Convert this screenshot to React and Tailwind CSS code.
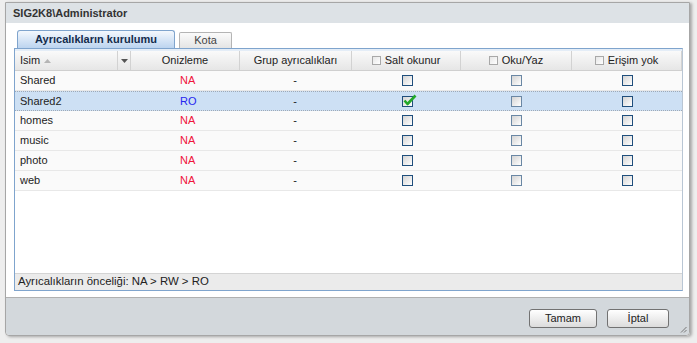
import React from "react";

const COLS = "grid grid-cols-[116px_109px_112px_109px_111px_110px]";

const rows = [
  { name: "Shared", prev: "NA" },
  { name: "Shared2", prev: "RO", selected: true, ro: true },
  { name: "homes", prev: "NA" },
  { name: "music", prev: "NA" },
  { name: "photo", prev: "NA" },
  { name: "web", prev: "NA" },
];

const Box = ({ checked, gray }) => (
  <span
    className={`relative inline-block h-[11px] w-[11px] border bg-gradient-to-br from-[#d4d4d4] to-[#ffffff] ${
      gray ? "border-[#6a87a4]" : "border-[#1f4e7c]"
    }`}
  >
    {checked && (
      <svg className="absolute -top-[3px] left-[0px]" width="14" height="12" viewBox="0 0 14 12">
        <path d="M1.5 6.5 L4.5 10 L12.5 1.5" fill="none" stroke="#22a82a" strokeWidth="2.6" strokeLinejoin="round" />
      </svg>
    )}
  </span>
);

const HeadBox = () => (
  <span className="inline-block h-[9px] w-[9px] border border-[#a8a8a8] bg-gradient-to-br from-[#e6e6e6] to-white" />
);

export default function App() {
  return (
    <div className="h-[343px] w-[697px] bg-[#eeeeee] pl-[5px] pt-[2px] font-['Liberation_Sans',Arial,sans-serif] text-[11px] text-[#222]">
      <div className="flex h-[334px] w-[685px] flex-col rounded-b-[4px] border border-[#a6a6a6] shadow-[2px_1px_3px_rgba(0,0,0,0.3)]">
        {/* title */}
        <div className="flex h-[20px] items-center bg-[#dde2e6] px-[7px] text-[11px] font-bold text-[#333]">
          SIG2K8\Administrator
        </div>

        {/* content */}
        <div className="flex flex-1 flex-col bg-white pl-[8px] pr-[6px] pt-[7px] pb-[6px]">
          {/* tabs */}
          <div className="flex items-end gap-[4px] pl-[3px]">
            <div className="flex h-[18px] w-[158px] items-center justify-center rounded-t-[3px] border border-b-0 border-[#7fa4cd] bg-gradient-to-b from-[#f4f8fd] to-[#bcd4ef] font-bold text-[#142c4c]">
              Ayrıcalıkların kurulumu
            </div>
            <div className="flex h-[16px] w-[53px] items-center justify-center rounded-t-[2px] border border-b-0 border-[#b4b4b4] bg-gradient-to-b from-[#fbfbfb] to-[#e4e4e4] text-[#444]">
              Kota
            </div>
          </div>

          {/* panel */}
          <div className="flex flex-1 flex-col border border-[#7fa4cd] border-r-[#b9c6d4]">
            <div className="h-[2px] bg-[#e4edf7]" />
            <div className={`${COLS} h-[20px] border-b border-[#cfcfcf] bg-gradient-to-b from-[#fafafa] to-[#e6e6e6] text-[#222]`}>
              <div className="flex items-center border-r border-[#d2d2d2]">
                <span className="flex flex-1 items-center gap-[4px] pl-[5px]">
                  Isim
                  <svg width="7" height="4" viewBox="0 0 7 4">
                    <path d="M0 4 L3.5 0 L7 4 Z" fill="#b5b5b5" />
                  </svg>
                </span>
                <span className="flex h-full w-[13px] items-center justify-center border-l border-[#d2d2d2]">
                  <svg width="7" height="4" viewBox="0 0 7 4">
                    <path d="M0 0 L7 0 L3.5 4 Z" fill="#555" />
                  </svg>
                </span>
              </div>
              <div className="flex items-center justify-center border-r border-[#d2d2d2]">Onizleme</div>
              <div className="flex items-center justify-center border-r border-[#d2d2d2]">Grup ayrıcalıkları</div>
              <div className="flex items-center justify-center gap-[4px] border-r border-[#d2d2d2]">
                <HeadBox />
                Salt okunur
              </div>
              <div className="flex items-center justify-center gap-[4px] border-r border-[#d2d2d2]">
                <HeadBox />
                Oku/Yaz
              </div>
              <div className="flex items-center justify-center gap-[4px] border-r border-[#d2d2d2]">
                <HeadBox />
                Erişim yok
              </div>
            </div>

            {rows.map((r) => (
              <div
                key={r.name}
                className={`${COLS} h-[20px] ${
                  r.selected
                    ? "border-y border-dotted border-[#9fa9b5] bg-[#cde0f4]"
                    : "border-b border-[#e8e8e8] bg-[#fafafa]"
                }`}
              >
                <div className="flex items-center pl-[5px]">{r.name}</div>
                <div className={`flex items-center pl-[49px] ${r.prev === "NA" ? "text-[#f0143c]" : "text-[#2626f0]"}`}>
                  {r.prev}
                </div>
                <div className="flex items-center justify-center pr-[2px]">-</div>
                <div className="flex items-center justify-center pl-[2px]">
                  <Box checked={r.ro} />
                </div>
                <div className="flex items-center justify-center">
                  <Box gray />
                </div>
                <div className="flex items-center justify-center">
                  <Box />
                </div>
              </div>
            ))}

            <div className="flex-1 bg-white" />

            <div className="flex h-[17px] items-center border-t border-[#d4d4d4] bg-[#ebebeb] pl-[3px] text-[11.4px]">
              Ayrıcalıkların önceliği: NA &gt; RW &gt; RO
            </div>
          </div>
        </div>

        {/* buttons */}
        <div className="relative flex h-[38px] items-start justify-end gap-[10px] rounded-b-[4px] border-t border-[#b0b0b0] bg-[#d3d8dc] pr-[20px] pt-[11px]">
          <button className="h-[19px] w-[68px] rounded-[3px] border border-[#727272] bg-gradient-to-b from-[#ffffff] to-[#dcdcdc] text-[11px] text-[#222]">
            Tamam
          </button>
          <button className="h-[19px] w-[62px] rounded-[3px] border border-[#727272] bg-gradient-to-b from-[#ffffff] to-[#dcdcdc] text-[11px] text-[#222]">
            İptal
          </button>
          <svg className="absolute bottom-[2px] right-[2px]" width="7" height="7" viewBox="0 0 7 7">
            <path d="M6.5 1 L1 6.5 M6.5 4 L4 6.5" stroke="#777" strokeWidth="1" />
          </svg>
        </div>
      </div>
    </div>
  );
}
